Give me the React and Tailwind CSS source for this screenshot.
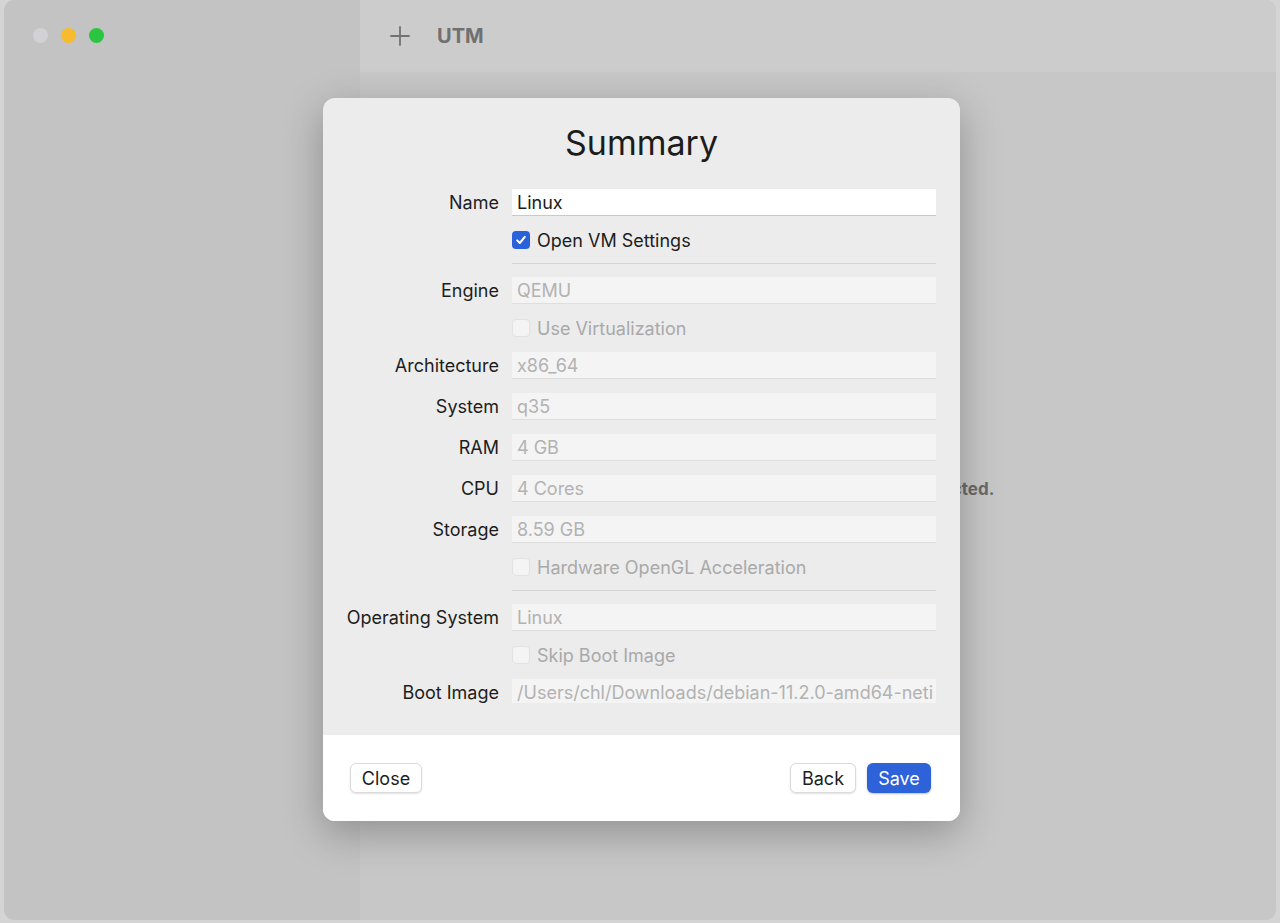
import React from 'react'

const FONT = { fontFamily: 'Inter, "Noto Sans", "Liberation Sans", sans-serif' }

const ROWS = [
  { type: 'field', label: 'Name', value: 'Linux', enabled: true },
  { type: 'check', label: 'Open VM Settings', checked: true, enabled: true },
  { type: 'divider' },
  { type: 'field', label: 'Engine', value: 'QEMU' },
  { type: 'check', label: 'Use Virtualization' },
  { type: 'field', label: 'Architecture', value: 'x86_64' },
  { type: 'field', label: 'System', value: 'q35' },
  { type: 'field', label: 'RAM', value: '4 GB' },
  { type: 'field', label: 'CPU', value: '4 Cores' },
  { type: 'field', label: 'Storage', value: '8.59 GB' },
  { type: 'check', label: 'Hardware OpenGL Acceleration' },
  { type: 'divider' },
  { type: 'field', label: 'Operating System', value: 'Linux' },
  { type: 'check', label: 'Skip Boot Image' },
  { type: 'field', label: 'Boot Image', value: '/Users/chl/Downloads/debian-11.2.0-amd64-neti' },
]

function Row({ row }) {
  if (row.type === 'divider') {
    return (
      <div className="flex my-[-1px]">
        <div className="w-[189px] shrink-0" />
        <div className="flex-1 h-px bg-[#d4d4d4]" />
      </div>
    )
  }
  if (row.type === 'check') {
    return (
      <div className="flex items-center h-5">
        <div className="w-[189px] shrink-0" />
        {row.checked ? (
          <span className="w-[18px] h-[18px] rounded-[4px] bg-[#2c62d9] flex items-center justify-center">
            <svg width="12" height="12" viewBox="0 0 12 12" fill="none">
              <path d="M2.2 6.4 L4.8 9 L9.8 2.8" stroke="white" strokeWidth="2" strokeLinecap="round" strokeLinejoin="round" />
            </svg>
          </span>
        ) : (
          <span className="w-[18px] h-[18px] rounded-[4px] bg-[#f4f4f4] border border-[#e2e2e2]" />
        )}
        <span className={`ml-[7px] text-[18px] ${row.enabled ? 'text-[#1d1d1d]' : 'text-[#a9a9a9]'}`}>{row.label}</span>
      </div>
    )
  }
  return (
    <div className="flex items-center h-[27px]">
      <div className="w-[176px] shrink-0 text-right text-[18px] text-[#1d1d1d] whitespace-nowrap">{row.label}</div>
      <div className="w-[13px] shrink-0" />
      <div
        className={`flex-1 min-w-0 h-[27px] px-[5px] flex items-center overflow-hidden whitespace-nowrap text-[18px] border-b ${
          row.enabled ? 'bg-white text-[#1b1b1b] border-[#c9c9c9]' : 'bg-[#f4f4f4] text-[#b2b2b2] border-[#dedede]'
        }`}
      >
        {row.value}
      </div>
    </div>
  )
}

function Button({ children, primary, w }) {
  return (
    <button
      className={`h-[30px] ${w} rounded-[6px] text-[18px] ${
        primary
          ? 'bg-[#2d62d8] text-white shadow-[0_1px_2px_rgba(0,0,0,0.25)]'
          : 'bg-white text-[#1d1d1d] border border-[#dadada] shadow-[0_1px_2px_rgba(0,0,0,0.12)]'
      }`}
    >
      {children}
    </button>
  )
}

export default function App() {
  return (
    <div className="w-[1280px] h-[923px] bg-[#d4d4d4] overflow-hidden relative" style={FONT}>
      {/* window */}
      <div className="ml-[4px] w-[1272px] h-[920px] rounded-[10px] overflow-hidden flex">
        <aside className="w-[356px] bg-[#c3c3c3] shrink-0 pt-[28px] pl-[29px]">
          <div className="flex gap-[13px]">
            <span className="w-[15px] h-[15px] rounded-full bg-[#d2d1d3]" />
            <span className="w-[15px] h-[15px] rounded-full bg-[#f8bb2d]" />
            <span className="w-[15px] h-[15px] rounded-full bg-[#2ac541]" />
          </div>
        </aside>
        <main className="flex-1 flex flex-col bg-[#c7c7c7]">
          <div className="h-[72px] bg-[#cdcccd] flex items-center pl-[29px] gap-[26px]">
            <svg width="22" height="22" viewBox="0 0 22 22" className="mt-[-1px]">
              <path d="M11 2 V20 M2 11 H20" stroke="#727272" strokeWidth="1.8" strokeLinecap="round" />
            </svg>
            <span className="text-[20px] font-bold text-[#707070]">UTM</span>
          </div>
          <div className="flex-1 flex items-center justify-center pb-[12px] pl-[36px]">
            <span className="text-[17px] font-bold text-[#6a6a6a]">No virtual machine has been selected.</span>
          </div>
        </main>
      </div>

      {/* sheet */}
      <div className="absolute left-[323px] top-[98px] w-[637px] h-[723px] rounded-[12px] overflow-hidden bg-[#ececec] shadow-[0_12px_40px_rgba(0,0,0,0.28)] flex flex-col">
        <div className="pt-[24px] h-[66px] text-center text-[34px] leading-[42px] text-[#1c1c1c]">Summary</div>
        <div className="mt-[25px] h-[514px] overflow-hidden pr-[24px]">
          <div className="flex flex-col gap-[14px]">
            {ROWS.map((r, i) => <Row key={i} row={r} />)}
          </div>
        </div>
        <div className="h-[32px]" />
        <div className="h-[86px] bg-white flex items-center pl-[27px] pr-[29px]">
          <Button w="w-[72px]">Close</Button>
          <div className="flex-1" />
          <div className="flex gap-[11px]">
            <Button w="w-[66px]">Back</Button>
            <Button w="w-[64px]" primary>Save</Button>
          </div>
        </div>
      </div>
    </div>
  )
}
